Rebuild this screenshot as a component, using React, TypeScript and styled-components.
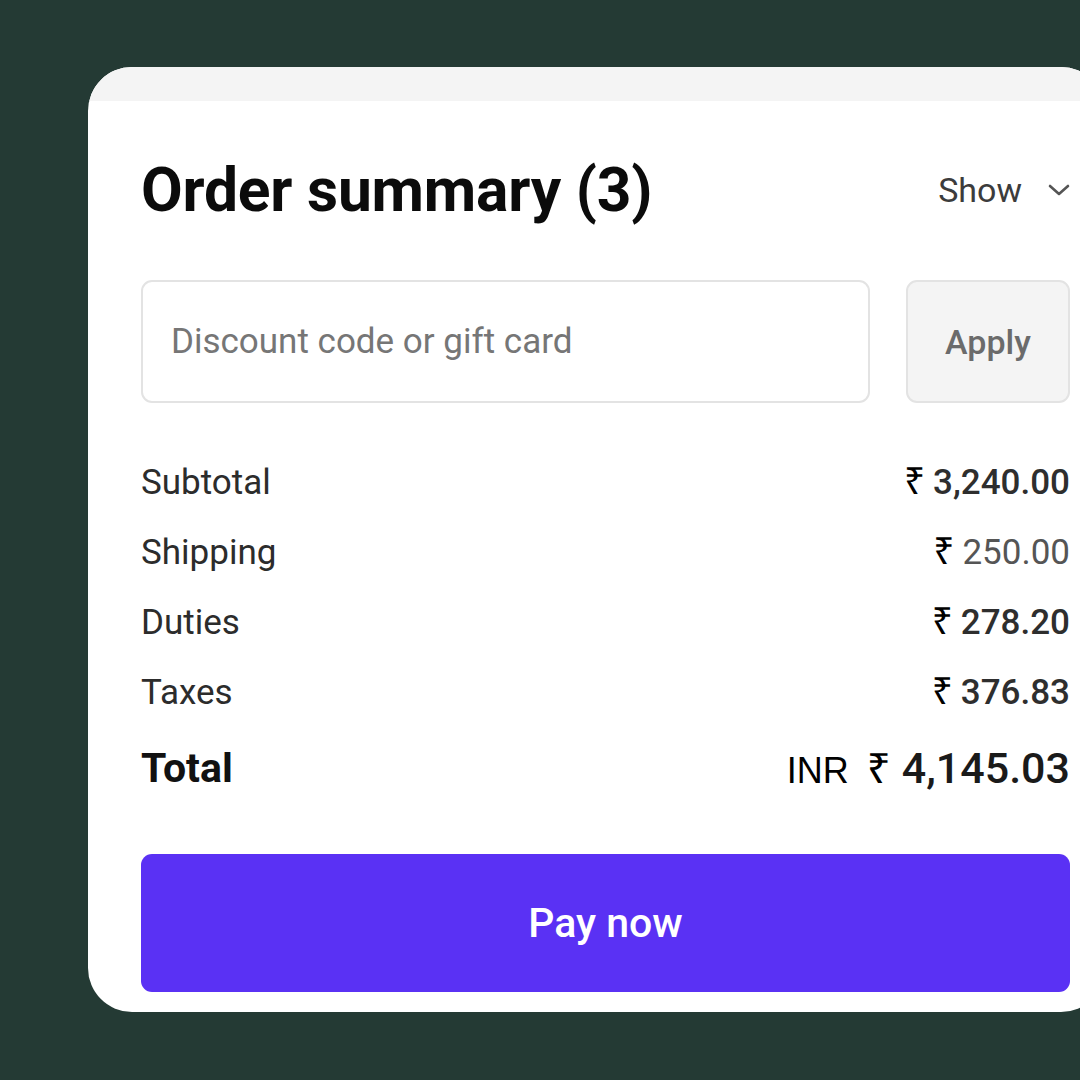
import React from "react";
import styled, { createGlobalStyle } from "styled-components";

const Global = createGlobalStyle`
  html, body {
    margin: 0;
    padding: 0;
    background: #243a34;
    overflow: hidden;
  }
  body {
    width: 1080px;
    height: 1080px;
    font-family: Roboto, "Noto Sans", sans-serif;
  }
`;

const Page = styled.div`
  width: 1080px;
  height: 1080px;
  padding-top: 67px;
  padding-left: 88px;
  box-sizing: border-box;
  overflow: hidden;
`;

const Card = styled.section`
  width: 1017px;
  height: 945px;
  background: #ffffff;
  border-radius: 44px;
  overflow: hidden;
  display: flex;
  flex-direction: column;
`;

const TopStrip = styled.div`
  height: 34px;
  background: #f4f4f4;
  flex: none;
`;

const Body = styled.div`
  padding: 49px 35px 20px 53px;
  display: flex;
  flex-direction: column;
`;

const Header = styled.div`
  height: 80px;
  display: flex;
  align-items: center;
  justify-content: space-between;
`;

const Title = styled.h1`
  margin: 0;
  font-size: 60.5px;
  font-weight: 700;
  color: #0b0b0b;
  letter-spacing: -0.2px;
`;

const Toggle = styled.button`
  border: none;
  background: none;
  padding: 0;
  display: flex;
  align-items: center;
  gap: 26px;
  font-family: Roboto, sans-serif;
  font-size: 34px;
  color: #3c3c3c;
  cursor: pointer;
`;

const DiscountRow = styled.div`
  margin-top: 50px;
  display: flex;
  gap: 36px;
  height: 123px;
`;

const CodeInput = styled.input`
  flex: 1;
  min-width: 0;
  height: 100%;
  box-sizing: border-box;
  border: 2px solid #e3e3e3;
  border-radius: 11px;
  padding: 0 28px;
  font-family: Roboto, sans-serif;
  font-size: 35px;
  color: #222;
  outline: none;
  &::placeholder {
    color: #767676;
  }
`;

const ApplyButton = styled.button`
  width: 164px;
  height: 100%;
  box-sizing: border-box;
  border: 2px solid #e3e3e3;
  border-radius: 11px;
  background: #f4f4f4;
  font-family: Roboto, sans-serif;
  font-size: 34px;
  font-weight: 500;
  color: #6b6b6b;
`;

const Lines = styled.div`
  margin-top: 44px;
  display: flex;
  flex-direction: column;
`;

const Line = styled.div<{ $total?: boolean }>`
  height: ${(p) => (p.$total ? 82 : 70)}px;
  display: flex;
  align-items: center;
  justify-content: space-between;
`;

const Label = styled.span<{ $total?: boolean }>`
  font-size: ${(p) => (p.$total ? 41 : 35)}px;
  font-weight: ${(p) => (p.$total ? 700 : 400)};
  color: ${(p) => (p.$total ? "#111" : "#2c2c2c")};
`;

const Amount = styled.span<{ $total?: boolean }>`
  display: block;
  font-size: ${(p) => (p.$total ? 43 : 35)}px;
  white-space: nowrap;
`;

const Currency = styled.span`
  font-family: "Liberation Sans", Arial, sans-serif;
  font-size: 36px;
  color: #000;
  margin-right: 18px;
  line-height: 0;
`;

const Rupee = styled.span<{ $big?: boolean }>`
  font-family: "Noto Sans", "DejaVu Sans", sans-serif;
  font-size: ${(p) => (p.$big ? 42 : 37)}px;
  color: #000;
  margin-right: ${(p) => (p.$big ? 11 : 8)}px;
  line-height: 0;
`;

const Value = styled.span<{ $muted?: boolean; $total?: boolean }>`
  font-weight: ${(p) => (p.$muted ? 400 : 500)};
  color: ${(p) => (p.$muted ? "#555" : p.$total ? "#1a1a1a" : "#2e2e2e")};
`;

const PayButton = styled.button`
  margin-top: 45px;
  height: 138px;
  border: none;
  border-radius: 11px;
  background: #5a31f4;
  color: #ffffff;
  font-family: Roboto, sans-serif;
  font-size: 41px;
  font-weight: 500;
`;

const Chevron = () => (
  <svg width="22" height="12" viewBox="0 0 22 12" fill="none">
    <path
      d="M2 2 L11 10 L20 2"
      stroke="#555"
      strokeWidth="2.6"
      strokeLinecap="round"
      strokeLinejoin="round"
    />
  </svg>
);

const lines = [
  { label: "Subtotal", value: "3,240.00", muted: false },
  { label: "Shipping", value: "250.00", muted: true },
  { label: "Duties", value: "278.20", muted: false },
  { label: "Taxes", value: "376.83", muted: false },
];

export default function App() {
  return (
    <>
      <Global />
      <Page>
        <Card>
          <TopStrip />
          <Body>
            <Header>
              <Title>Order summary (3)</Title>
              <Toggle>
                Show
                <Chevron />
              </Toggle>
            </Header>
            <DiscountRow>
              <CodeInput placeholder="Discount code or gift card" />
              <ApplyButton>Apply</ApplyButton>
            </DiscountRow>
            <Lines>
              {lines.map((l) => (
                <Line key={l.label}>
                  <Label>{l.label}</Label>
                  <Amount>
                    <Rupee>₹</Rupee>
                    <Value $muted={l.muted}>{l.value}</Value>
                  </Amount>
                </Line>
              ))}
              <Line $total>
                <Label $total>Total</Label>
                <Amount $total>
                  <Currency>INR</Currency>
                  <Rupee $big>₹</Rupee>
                  <Value $total>4,145.03</Value>
                </Amount>
              </Line>
            </Lines>
            <PayButton>Pay now</PayButton>
          </Body>
        </Card>
      </Page>
    </>
  );
}
